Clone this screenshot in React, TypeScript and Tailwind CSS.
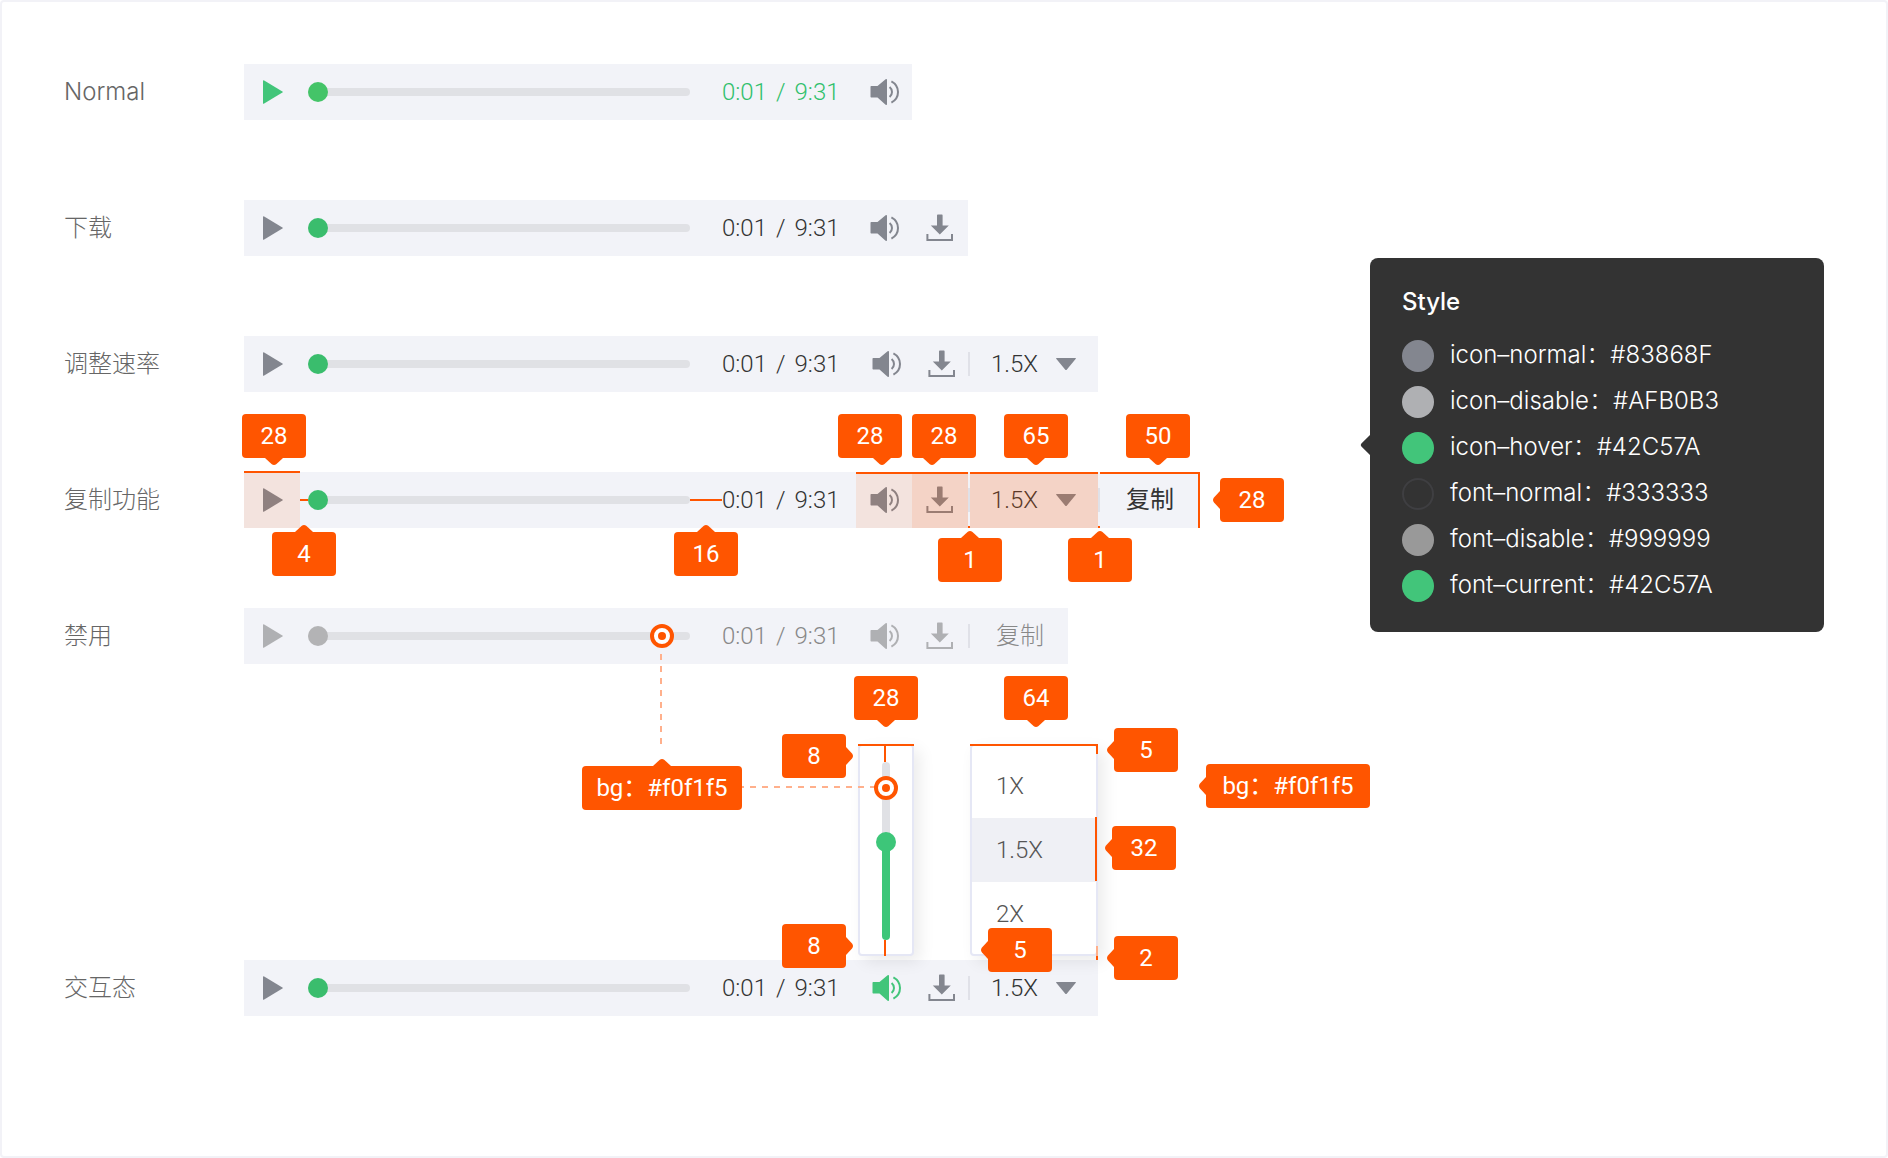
import type { ReactNode } from "react";

const LABEL = "font-['Inter','Noto_Sans_CJK_SC',sans-serif]";
const DIGIT = "font-['Roboto','Noto_Sans_CJK_SC',sans-serif]";

function PlayIcon() {
  return (
    <svg width="20" height="24" viewBox="0 0 20 24" fill="currentColor" aria-hidden="true">
      <path d="M0 1Q0 -.3 1.2 .4L19.4 11.4Q20.3 12 19.4 12.6L1.2 23.6Q0 24.3 0 23Z" />
    </svg>
  );
}

function VolumeIcon() {
  return (
    <svg width="29" height="26" viewBox="0 0 29 26" fill="none" aria-hidden="true">
      <path
        d="M1.2 7H7.5L15.6 .3Q17 -.4 17 1V25Q17 26.4 15.6 25.7L7.5 18.6H1.2Q.5 18.6 .5 17.8V7.8Q.5 7 1.2 7Z"
        fill="currentColor"
      />
      <path d="M19.6 8Q22 10 22 13T19.6 18" stroke="currentColor" strokeWidth="2" />
      <path d="M21.4 2.4Q28 6 28 13T21.4 23.6" stroke="currentColor" strokeWidth="2" />
    </svg>
  );
}

function DownloadIcon() {
  return (
    <svg width="28" height="28" viewBox="0 0 28 28" fill="none" aria-hidden="true">
      <path d="M11 1.4Q11 .6 11.8 .6H16Q16.6 .6 16.6 1.4V11.4H22.8L13.8 20.4L4.8 11.4H11Z" fill="currentColor" />
      <path d="M1.4 20V26H26V20" stroke="currentColor" strokeWidth="2" />
    </svg>
  );
}

function CaretIcon() {
  return (
    <svg width="20" height="12" viewBox="0 0 20 12" fill="currentColor" aria-hidden="true">
      <path d="M.6 0H19.4Q20.4 .1 19.6 .9L10.7 11.7Q10 12.4 9.3 11.7L.4 .9Q-.4 .1 .6 0Z" />
    </svg>
  );
}

type Side = "up" | "down" | "left" | "right";

const ARROW: Record<Side, { cls: string; w: number; h: number; d: string }> = {
  down: { cls: "top-full left-1/2 -translate-x-1/2", w: 18, h: 7, d: "M0 0H18L11.5 6Q9 8 6.5 6Z" },
  up: { cls: "bottom-full left-1/2 -translate-x-1/2", w: 18, h: 7, d: "M0 7H18L11.5 1Q9 -1 6.5 1Z" },
  left: { cls: "right-full top-1/2 -translate-y-1/2", w: 7, h: 18, d: "M7 0V18L1 11.5Q-1 9 1 6.5Z" },
  right: { cls: "left-full top-1/2 -translate-y-1/2", w: 7, h: 18, d: "M0 0V18L6 11.5Q8 9 6 6.5Z" },
};

/** Orange dimension tag; `at` places it around its anchor. */
function Tag({ at, arrow, arrowAt, children }: { at: string; arrow: Side; arrowAt?: string; children: ReactNode }) {
  const a = ARROW[arrow];
  return (
    <span
      className={`absolute z-20 flex h-11 min-w-16 items-center justify-center rounded bg-[#ff5500] text-2xl whitespace-nowrap text-white ${DIGIT} ${at}`}
    >
      {children}
      <svg
        className={`absolute ${arrowAt ?? a.cls}`}
        width={a.w}
        height={a.h}
        viewBox={`0 0 ${a.w} ${a.h}`}
        fill="#ff5500"
        aria-hidden="true"
      >
        <path d={a.d} />
      </svg>
    </span>
  );
}

function Target({ at }: { at: string }) {
  return (
    <span
      className={`absolute z-20 flex size-6 items-center justify-center rounded-full border-4 border-[#ff5500] bg-white ${at}`}
    >
      <span className="size-2 rounded-full bg-[#ff5500]" />
    </span>
  );
}

const line = "absolute z-10 bg-[#ff5500]";

function Row({ label, children }: { label: string; children: ReactNode }) {
  return (
    <section className="flex h-14 items-center">
      <h2 className={`w-45 shrink-0 text-2xl font-light text-[#666] ${LABEL}`}>{label}</h2>
      <div className="flex h-14 items-center bg-[#f2f3f8]">{children}</div>
    </section>
  );
}

function Play({ tone = "text-[#83868f]", disabled, children }: { tone?: string; disabled?: boolean; children?: ReactNode }) {
  return (
    <div className="relative size-14">
      <button type="button" aria-label="播放" disabled={disabled} className={`flex size-14 items-center pl-[19px] ${tone}`}>
        <PlayIcon />
      </button>
      {children}
    </div>
  );
}

function Progress({ thumb = "[&::-webkit-slider-thumb]:bg-[#3abd6d]", disabled, children }: { thumb?: string; disabled?: boolean; children?: ReactNode }) {
  return (
    <div className="relative mr-8 ml-2 flex h-5 w-[382px] items-center">
      <input
        type="range"
        aria-label="播放进度"
        min={0}
        max={571}
        defaultValue={0}
        disabled={disabled}
        className={`h-5 w-full appearance-none bg-transparent [&::-webkit-slider-runnable-track]:h-2 [&::-webkit-slider-runnable-track]:rounded-full [&::-webkit-slider-runnable-track]:bg-[#e0e1e5] [&::-webkit-slider-thumb]:-mt-1.5 [&::-webkit-slider-thumb]:size-5 [&::-webkit-slider-thumb]:appearance-none [&::-webkit-slider-thumb]:rounded-full ${thumb}`}
      />
      {children}
    </div>
  );
}

function Time({ tone = "text-[#333]", wide }: { tone?: string; wide?: boolean }) {
  return (
    <div className={`flex shrink-0 gap-[9px] text-2xl font-light whitespace-nowrap ${DIGIT} ${tone} ${wide ? "w-34" : "w-[134px]"}`}>
      <time>0:01</time>
      <span>/</span>
      <time>9:31</time>
    </div>
  );
}

function IconCell({
  name,
  tone = "text-[#83868f]",
  width = "w-14",
  disabled,
  icon,
  children,
}: {
  name: string;
  tone?: string;
  width?: string;
  disabled?: boolean;
  icon: ReactNode;
  children?: ReactNode;
}) {
  return (
    <div className={`relative h-14 ${width}`}>
      <button type="button" aria-label={name} disabled={disabled} className={`flex size-full items-center pl-3.5 ${tone}`}>
        {icon}
      </button>
      {children}
    </div>
  );
}

function Divider({ children }: { children?: ReactNode }) {
  return (
    <div className="relative flex h-14 w-0.5 items-center">
      <span className="h-6 w-0.5 bg-[#e0e1e8]" />
      {children}
    </div>
  );
}

function Speed({ children }: { children?: ReactNode }) {
  return (
    <div className="relative flex h-14 w-32 items-center text-[#83868f]">
      <select
        aria-label="播放速率"
        defaultValue="1.5X"
        className={`size-full appearance-none bg-transparent pl-[21px] text-2xl font-light text-[#333] ${DIGIT}`}
      >
        <option>1X</option>
        <option>1.5X</option>
        <option>2X</option>
      </select>
      <span className="pointer-events-none absolute right-[22px]">
        <CaretIcon />
      </span>
      {children}
    </div>
  );
}

function VolumePopup() {
  return (
    <div className="absolute bottom-15 left-0 z-10 flex h-53 w-14 justify-center rounded border-2 border-[#e5e7f5] bg-white py-4 shadow-[6px_6px_16px_rgba(0,0,0,0.08)]">
      <input
        type="range"
        aria-label="音量"
        min={0}
        max={158}
        defaultValue={88}
        className="h-[178px] w-5 appearance-none bg-transparent [direction:rtl] [writing-mode:vertical-lr] [&::-webkit-slider-runnable-track]:w-2 [&::-webkit-slider-runnable-track]:rounded-full [&::-webkit-slider-runnable-track]:bg-[linear-gradient(to_top,#3dc679_50%,#e0e1e5_50%)] [&::-webkit-slider-thumb]:-ml-1.5 [&::-webkit-slider-thumb]:size-5 [&::-webkit-slider-thumb]:appearance-none [&::-webkit-slider-thumb]:rounded-full [&::-webkit-slider-thumb]:bg-[#3dc679]"
      />
      <span className={`${line} -top-0.5 -right-0.5 -left-0.5 h-0.5`} />
      <span className={`${line} top-0 left-6 h-4 w-0.5`} />
      <span className={`${line} -bottom-0.5 left-6 h-4 w-0.5`} />
      <span className="absolute top-10 right-9 h-0.5 w-34 bg-[repeating-linear-gradient(to_left,#ffb08c_0_6px,transparent_6px_12px)]" />
      <Target at="left-3.5 top-[30px]" />
      <Tag at="-top-[70px] left-1/2 -translate-x-1/2" arrow="down">28</Tag>
      <Tag at="-top-3 right-[66px]" arrow="right">8</Tag>
      <Tag at="-bottom-3.5 right-[66px]" arrow="right">8</Tag>
      <Tag at="top-5 right-[170px] w-40" arrow="up">bg：#f0f1f5</Tag>
    </div>
  );
}

function SpeedMenu() {
  return (
    <div className="absolute bottom-15 left-0 z-10 h-53 w-32 rounded border-2 border-[#e5e7f5] bg-white py-2 shadow-[6px_6px_16px_rgba(0,0,0,0.08)]">
      <ul className={`text-2xl font-light text-[#555] ${DIGIT}`}>
        <li>
          <button type="button" className="flex h-16 w-full items-center pl-6">1X</button>
        </li>
        <li>
          <button type="button" aria-pressed="true" className="flex h-16 w-full items-center bg-[#eff0f5] pl-6">1.5X</button>
        </li>
        <li>
          <button type="button" className="flex h-16 w-full items-center pl-6">2X</button>
        </li>
      </ul>
      <span className={`${line} -top-0.5 -right-0.5 -left-0.5 h-0.5`} />
      <span className={`${line} -top-0.5 -right-0.5 h-2.5 w-0.5`} />
      <span className={`${line} top-[71px] -right-px h-16 w-0.5`} />
      <span className="absolute -right-0.5 -bottom-0.5 z-10 h-2.5 w-0.5 bg-[#ffb08c]" />
      <span className={`${line} -right-0.5 -bottom-1.5 h-1 w-0.5`} />
      <Tag at="-top-[70px] left-8" arrow="down">64</Tag>
      <Tag at="-top-[18px] left-[142px]" arrow="left">5</Tag>
      <Tag at="top-20 left-[140px]" arrow="left">32</Tag>
      <Tag at="-bottom-[18px] left-4" arrow="left">5</Tag>
      <Tag at="-bottom-[26px] left-[142px]" arrow="left">2</Tag>
      <Tag at="top-[18px] left-[234px] w-41" arrow="left">bg：#f0f1f5</Tag>
    </div>
  );
}

const STYLES = [
  { name: "icon–normal", value: "#83868F", dot: "bg-[#83868f]" },
  { name: "icon–disable", value: "#AFB0B3", dot: "bg-[#afb0b3]" },
  { name: "icon–hover", value: "#42C57A", dot: "bg-[#42c57a]" },
  { name: "font–normal", value: "#333333", dot: "border-2 border-[#3f3f42] bg-[#333333]" },
  { name: "font–disable", value: "#999999", dot: "bg-[#999999]" },
  { name: "font–current", value: "#42C57A", dot: "bg-[#42c57a]" },
];

function StylePanel() {
  return (
    <aside className={`relative mt-[194px] w-[454px] shrink-0 rounded-lg bg-[#333] px-8 pt-8 pb-[30px] text-2xl text-white ${LABEL}`}>
      <svg className="absolute top-1/2 right-full -translate-y-1/2" width="10" height="20" viewBox="0 0 10 20" fill="#333" aria-hidden="true">
        <path d="M10 0V20L1.4 11.4Q0 10 1.4 8.6Z" />
      </svg>
      <h2 className="h-[50px] text-2xl leading-6 font-medium">Style</h2>
      <ul className="flex flex-col gap-3.5">
        {STYLES.map((s) => (
          <li key={s.name} className="flex h-8 items-center gap-4">
            <span className={`size-8 shrink-0 rounded-full ${s.dot}`} />
            <span className="pb-0.5 font-light whitespace-nowrap">
              {s.name}：{s.value}
            </span>
          </li>
        ))}
      </ul>
    </aside>
  );
}

export default function App() {
  const wash = "pointer-events-none absolute inset-0";
  const muted = "text-[#afb0b3]";
  return (
    <main className="flex min-h-screen items-start justify-between rounded border-2 border-[#f2f2f7] bg-white py-[62px] pr-[62px] pl-[62px]">
      <div className="flex flex-col gap-20">
        <Row label="Normal">
          <Play tone="text-[#42c57a]" />
          <Progress thumb="[&::-webkit-slider-thumb]:bg-[#44c468]" />
          <Time tone="text-[#30c06c]" />
          <IconCell name="音量" icon={<VolumeIcon />} />
        </Row>
        <Row label="下载">
          <Play />
          <Progress />
          <Time />
          <IconCell name="音量" icon={<VolumeIcon />} />
          <IconCell name="下载" icon={<DownloadIcon />} />
        </Row>
        <Row label="调整速率">
          <Play />
          <Progress />
          <Time wide />
          <IconCell name="音量" icon={<VolumeIcon />} />
          <IconCell name="下载" icon={<DownloadIcon />} width="w-[54px]" />
          <Divider />
          <Speed />
        </Row>
        <Row label="复制功能">
          <Play>
            <span className={`${wash} bg-[#ff5500]/10`} />
            <span className={`${line} inset-x-0 -top-px h-0.5`} />
            <Tag at="bottom-[70px] -left-0.5" arrow="down">28</Tag>
          </Play>
          <Progress>
            <span className={`${line} right-full h-0.5 w-2`} />
            <span className={`${line} left-full h-0.5 w-8`} />
            <Tag at="top-[42px] -left-9" arrow="up">4</Tag>
            <Tag at="top-[42px] -right-12" arrow="up">16</Tag>
          </Progress>
          <Time />
          <IconCell name="音量" icon={<VolumeIcon />}>
            <span className={`${wash} bg-[#ff5500]/10`} />
            <span className={`${line} inset-x-0 top-0 h-0.5`} />
            <Tag at="bottom-[70px] right-2.5" arrow="down" arrowAt="top-full left-[35px]">28</Tag>
          </IconCell>
          <IconCell name="下载" icon={<DownloadIcon />}>
            <span className={`${wash} bg-[#ff5500]/20`} />
            <span className={`${line} inset-x-0 top-0 h-0.5`} />
            <Tag at="bottom-[70px] left-0" arrow="down" arrowAt="top-full left-[11px]">28</Tag>
          </IconCell>
          <Divider>
            <span className={`${line} bottom-0 left-0 size-0.5`} />
            <Tag at="-bottom-[54px] -left-[30px]" arrow="up">1</Tag>
          </Divider>
          <Speed>
            <span className={`${wash} bg-[#ff5500]/20`} />
            <span className={`${line} inset-x-0 top-0 h-0.5`} />
            <Tag at="bottom-[70px] left-[34px]" arrow="down">65</Tag>
          </Speed>
          <Divider>
            <span className={`${line} bottom-0 left-0 size-0.5`} />
            <Tag at="-bottom-[54px] -left-[30px]" arrow="up">1</Tag>
          </Divider>
          <div className="relative">
            <button type="button" className={`h-14 w-25 text-2xl text-[#333] ${LABEL}`}>复制</button>
            <span className={`${line} inset-x-0 top-0 h-0.5`} />
            <span className={`${line} inset-y-0 right-0 w-0.5`} />
            <Tag at="bottom-[70px] right-2.5" arrow="down">50</Tag>
            <Tag at="top-1.5 left-30" arrow="left">28</Tag>
          </div>
        </Row>
        <Row label="禁用">
          <Play disabled tone={muted} />
          <Progress disabled thumb="[&::-webkit-slider-thumb]:bg-[#b3b3b5]">
            <Target at="right-4" />
            <span className="absolute top-7 right-7 h-[90px] w-0.5 bg-[repeating-linear-gradient(to_bottom,#ffb08c_0_6px,transparent_6px_12px)]" />
          </Progress>
          <Time tone="text-[#888]" />
          <IconCell name="音量" disabled tone={muted} icon={<VolumeIcon />} />
          <IconCell name="下载" disabled tone={muted} icon={<DownloadIcon />} />
          <Divider />
          <button type="button" disabled className={`h-14 w-[98px] pl-0.5 text-2xl font-light text-[#888] ${LABEL}`}>复制</button>
        </Row>
        <div className="mt-54">
          <Row label="交互态">
            <Play />
            <Progress />
            <Time wide />
            <IconCell name="音量" tone="text-[#42c57a]" icon={<VolumeIcon />}>
              <VolumePopup />
            </IconCell>
            <IconCell name="下载" icon={<DownloadIcon />} width="w-[54px]" />
            <Divider />
            <Speed>
              <SpeedMenu />
            </Speed>
          </Row>
        </div>
      </div>
      <StylePanel />
    </main>
  );
}
